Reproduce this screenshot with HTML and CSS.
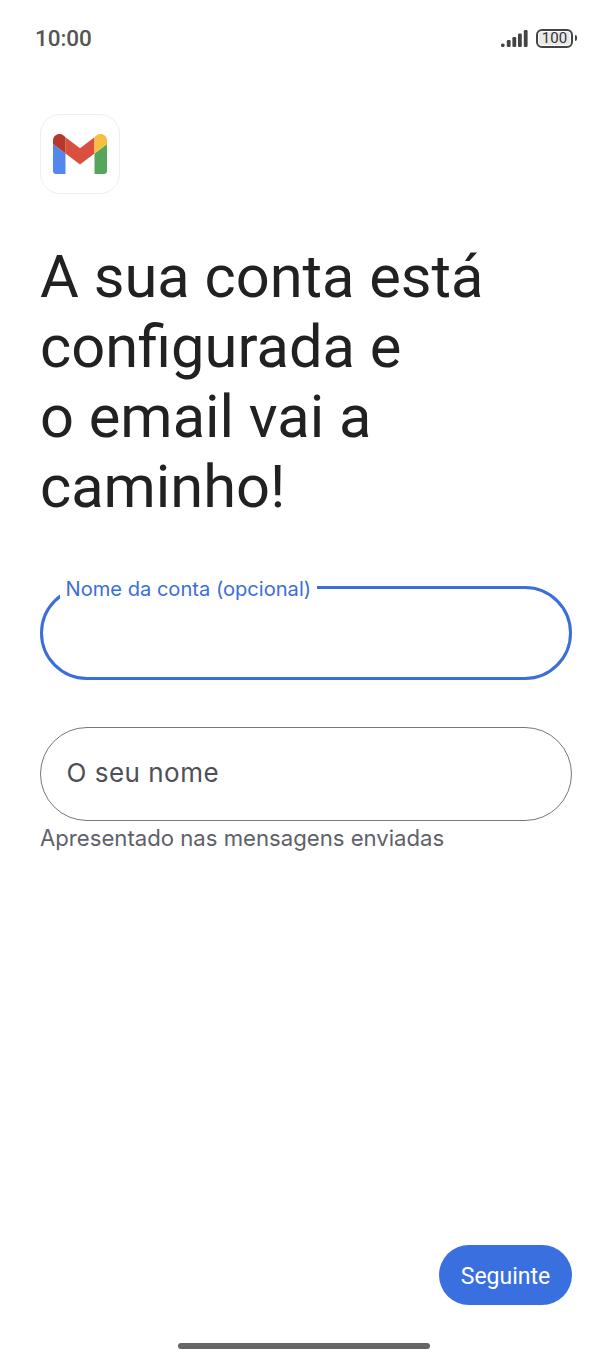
FILE: index.html
```html
<!DOCTYPE html>
<html lang="pt">
<head>
  <meta charset="UTF-8">
  <link rel="stylesheet" href="styles.css">
  <title>Gmail</title>
</head>
<body>
  <div class="screen">
    <div class="status">
      <span class="time">10:00</span>
      <div class="status-icons">
        <svg class="signal" width="27" height="17" viewBox="0 0 27 17">
          <rect x="0" y="13.500" width="3.600" height="3.500" rx="1.500" fill="#444"/>
          <rect x="5.800" y="10" width="3.800" height="7" rx="1.200" fill="#444"/>
          <rect x="11.400" y="7" width="3.800" height="10" rx="1.200" fill="#444"/>
          <rect x="17" y="3.500" width="3.800" height="13.500" rx="1.200" fill="#444"/>
          <rect x="22.800" y="0" width="3.800" height="17" rx="1.200" fill="#444"/>
        </svg>
        <div class="battery"><span class="battery-level">100</span></div>
        <span class="battery-tip"></span>
      </div>
    </div>

    <div class="content">
      <div class="logo">
        <svg width="54" height="40" viewBox="0 0 54 40">
          <path d="M0 10L12.500 19.500V40H3A3 3 0 0 1 0 37Z" fill="#5387ee"/>
          <path d="M54 10V37A3 3 0 0 1 51 40H41.500V19.500Z" fill="#55a65c"/>
          <path d="M12.500 3.200L27 14.300L41.500 3.200V19.500L27 30.500L12.500 19.500Z" fill="#d9503f"/>
          <path d="M0 10V6.500A6.500 6.500 0 0 1 10.300 1.200L12.500 3.200V19.500Z" fill="#b4382b"/>
          <path d="M41.500 3.200L43.700 1.200A6.500 6.500 0 0 1 54 6.500V10L41.500 19.500Z" fill="#f5c03f"/>
        </svg>
      </div>

      <h1 class="title">A sua conta está<br>configurada e<br>o email vai a<br>caminho!</h1>

      <div class="field field-active">
        <label class="field-label">Nome da conta (opcional)</label>
      </div>

      <div class="field field-plain">
        <span class="field-text">O seu nome</span>
      </div>
      <p class="hint">Apresentado nas mensagens enviadas</p>

      <div class="actions">
        <button class="next">Seguinte</button>
      </div>
    </div>

    <div class="home-wrap"><div class="home-bar"></div></div>
  </div>
</body>
</html>
```

FILE: styles.css
```css
*{margin:0;padding:0;box-sizing:border-box}
html,body{height:100%}
body{
	background:#fff;
	font-family:Roboto,"Liberation Sans",sans-serif;
	overflow:hidden;
}
.screen{
	width:612px;
	height:1361px;
	display:flex;
	flex-direction:column;
}
.status{
	display:flex;
	justify-content:space-between;
	align-items:center;
	height:38px;
	margin-top:19px;
	padding:0 35px;
}
.time{
	font-size:22.500px;
	font-weight:500;
	letter-spacing:-.1px;
	color:#555;
}
.status-icons{
	display:flex;
	align-items:center;
}
.signal{
	margin-right:8px;
}
.battery{
	width:37px;
	height:19px;
	border:2px solid #444;
	border-radius:6px;
	padding:1px;
	display:flex;
}
.battery-level{
	flex:1;
	background:#e9e9e9;
	border-radius:3px;
	font-size:15px;
	line-height:13px;
	text-align:center;
	color:#333;
}
.battery-tip{
	width:2.500px;
	height:6px;
	margin-left:1.500px;
	background:#444;
	border-radius:0 2px 2px 0;
}
.content{
	flex:1;
	display:flex;
	flex-direction:column;
	padding:0 40px;
}
.logo{
	width:80px;
	height:80px;
	margin-top:57px;
	border:1px solid #eee;
	border-radius:20px;
	display:flex;
	align-items:center;
	justify-content:center;
}
.title{
	margin-top:48px;
	font-size:59.600px;
	font-weight:400;
	line-height:70px;
	color:#212121;
}
.field{
	width:532px;
	height:94px;
	border-radius:47px;
	position:relative;
}
.field-active{
	margin-top:64px;
	border:3.500px solid #3a6fd8;
}
.field-label{
	position:absolute;
	left:16.500px;
	top:-13.500px;
	padding:0 6px;
	background:#fff;
	font-family:Inter,Roboto,sans-serif;
	font-size:20.100px;
	line-height:26px;
	color:#3a6fd8;
}
.field-plain{
	margin-top:47px;
	border:1.500px solid #777;
	display:flex;
	align-items:center;
	padding:0 0 3px 25.500px;
}
.field-text{
	font-family:Inter,Roboto,sans-serif;
	font-size:26px;
	letter-spacing:.5px;
	color:#4f4f55;
}
.hint{
	margin-top:2px;
	font-family:Inter,Roboto,sans-serif;
	font-size:22.150px;
	line-height:30px;
	color:#60606a;
}
.actions{
	margin-top:auto;
	display:flex;
	justify-content:flex-end;
}
.next{
	width:133px;
	height:60px;
	padding-top:2px;
	border:0;
	border-radius:30px;
	background:#3a6fdf;
	color:#fff;
	font-family:Roboto,sans-serif;
	font-size:23px;
}
.home-wrap{
	height:56px;
	padding:38px 4px 0 0;
	display:flex;
	justify-content:center;
}
.home-bar{
	width:252px;
	height:6px;
	border-radius:3px;
	background:#666;
}
```
